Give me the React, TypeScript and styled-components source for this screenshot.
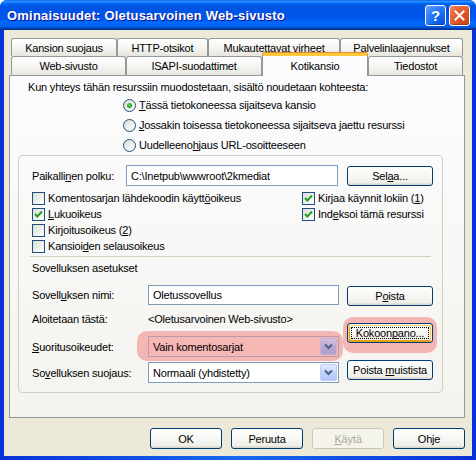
import React, { ReactNode } from "react";
import styled, { createGlobalStyle } from "styled-components";

const GlobalStyle = createGlobalStyle`
  html, body {
    margin: 0;
    padding: 0;
  }
  body {
    font-family: "Liberation Sans", Arial, sans-serif;
    font-size: 11px;
    letter-spacing: -0.2px;
    color: #000;
  }
  u {
    text-decoration: underline;
    text-underline-offset: 1px;
  }
`;

const Window = styled.div`
  width: 476px;
  height: 460px;
  box-sizing: border-box;
  display: flex;
  flex-direction: column;
  background: linear-gradient(to right, #0831d9, #166aee 50%, #0831d9);
  border-radius: 7px 7px 0 0;
  overflow: hidden;
`;

const TitleBar = styled.div`
  height: 30px;
  flex: none;
  display: flex;
  align-items: center;
  padding: 0 6px 0 7px;
  gap: 3px;
  background: linear-gradient(
    to bottom,
    #0058ee 0%,
    #3593ff 4%,
    #288eff 6%,
    #127dff 8%,
    #036ffc 10%,
    #0262ee 14%,
    #0057e5 20%,
    #0054e3 24%,
    #0055eb 56%,
    #005bf5 66%,
    #026afe 76%,
    #0062ef 86%,
    #0052d6 92%,
    #0040ab 94%,
    #003092 100%
  );
`;

const Title = styled.div`
  flex: 1;
  color: #fff;
  font-weight: bold;
  font-size: 13px;
  letter-spacing: 0.2px;
  text-shadow: 1px 1px #0f1089;
  white-space: nowrap;
`;

const CaptionButton = styled.div<{ $kind: "help" | "close" }>`
  width: 21px;
  height: 21px;
  box-sizing: border-box;
  border: 1px solid #fff;
  border-radius: 3px;
  display: flex;
  align-items: center;
  justify-content: center;
  color: #fff;
  font-weight: bold;
  font-size: 15px;
  background: ${({ $kind }) =>
    $kind === "help"
      ? "radial-gradient(circle at 90% 90%, #0054e3 0%, #2276f5 55%, #68a2ff 100%)"
      : "radial-gradient(circle at 90% 90%, #cc4616 0%, #e3592c 55%, #f08a60 100%)"};
  box-shadow: inset 0 -1px 1px rgba(0, 0, 0, 0.25);
`;

const Body = styled.div`
  flex: 1;
  margin: 0 4px 4px;
  background: #ece9d8;
  padding: 8px 7px 0 5px;
  display: flex;
  flex-direction: column;
`;

const TabStrip = styled.div`
  padding: 0 2px;
  display: flex;
  flex-direction: column;
`;

const TabRow = styled.div<{ $height: number }>`
  display: flex;
  height: ${({ $height }) => $height}px;
  align-items: flex-end;
`;

const Tab = styled.div<{ $width: number; $active?: boolean }>`
  position: relative;
  width: ${({ $width }) => $width}px;
  height: ${({ $active }) => ($active ? "23px" : "100%")};
  margin-bottom: ${({ $active }) => ($active ? "-1px" : "0")};
  z-index: ${({ $active }) => ($active ? 2 : 1)};
  box-sizing: border-box;
  border: 1px solid #919b9c;
  border-bottom: none;
  border-radius: 3px 3px 0 0;
  display: flex;
  align-items: ${({ $active }) => ($active ? "flex-start" : "center")};
  padding-top: ${({ $active }) => ($active ? "4px" : "0")};
  justify-content: center;
  white-space: nowrap;
  background: ${({ $active }) =>
    $active ? "#fcfcfe" : "linear-gradient(to bottom, #ffffff, #f3f3ef 60%, #e6e5de)"};
  border-top: ${({ $active }) => ($active ? "3px solid #ffc83c" : "1px solid #919b9c")};
  ${({ $active }) => ($active ? "box-shadow: 0 -1px 0 #e68b2c;" : "")}
`;

const Panel = styled.div`
  height: 343px;
  box-sizing: border-box;
  border: 1px solid #919b9c;
  background: linear-gradient(to bottom, #fcfcfe, #f4f3ee);
  padding: 4px 0 0;
  display: flex;
  flex-direction: column;
`;

const Intro = styled.div`
  line-height: 14px;
  padding-left: 18px;
`;

const RadioList = styled.div`
  margin: 1px 0 0 113px;
  display: flex;
  flex-direction: column;
`;

const OptionRow = styled.div<{ $height: number }>`
  height: ${({ $height }) => $height}px;
  display: flex;
  align-items: center;
  gap: 3px;
  white-space: nowrap;
`;

const RadioCircle = styled.span<{ $checked?: boolean }>`
  width: 13px;
  height: 13px;
  box-sizing: border-box;
  border-radius: 50%;
  border: 1px solid #1c5180;
  background: linear-gradient(135deg, #dcdcd7, #ffffff);
  display: flex;
  align-items: center;
  justify-content: center;
  &::after {
    content: "";
    display: ${({ $checked }) => ($checked ? "block" : "none")};
    width: 5px;
    height: 5px;
    border-radius: 50%;
    background: radial-gradient(circle at 40% 40%, #5ed65a, #21a121 60%, #188518);
  }
`;

const CheckBox = styled.span`
  width: 13px;
  height: 13px;
  flex: none;
  box-sizing: border-box;
  border: 1px solid #1c5180;
  background: linear-gradient(135deg, #dcdcd7, #ffffff);
  display: flex;
  align-items: center;
  justify-content: center;
`;

const GroupBox = styled.div`
  margin: 0 21px 0 8px;
  height: 238px;
  box-sizing: border-box;
  border: 1px solid #d0d0bf;
  border-radius: 4px;
  padding: 9px 9px 0 13px;
  display: flex;
  flex-direction: column;
`;

const PathRow = styled.div`
  height: 21px;
  display: flex;
  align-items: center;
  gap: 9px;
`;

const Label = styled.div<{ $width?: number }>`
  width: ${({ $width }) => ($width ? `${$width}px` : "auto")};
  flex: none;
  white-space: nowrap;
`;

const Field = styled.div<{ $width: number; $height?: number }>`
  width: ${({ $width }) => $width}px;
  height: ${({ $height }) => $height ?? 21}px;
  box-sizing: border-box;
  border: 1px solid #7f9db9;
  background: #fff;
  padding: 0 4px;
  display: flex;
  align-items: center;
  white-space: nowrap;
`;

const Button = styled.div<{ $width: number; $height?: number; $disabled?: boolean; $focused?: boolean }>`
  width: ${({ $width }) => $width}px;
  height: ${({ $height }) => $height ?? 21}px;
  flex: none;
  box-sizing: border-box;
  border: 1px solid ${({ $disabled }) => ($disabled ? "#c9c7ba" : "#003c74")};
  border-radius: 3px;
  display: flex;
  align-items: center;
  justify-content: center;
  white-space: nowrap;
  color: ${({ $disabled }) => ($disabled ? "#aca899" : "#000")};
  background: ${({ $disabled }) =>
    $disabled ? "#f5f4ea" : "linear-gradient(to bottom, #ffffff, #f0f0ea 86%, #d6d0c5)"};
  position: relative;
  z-index: 1;
  ${({ $focused }) =>
    $focused
      ? `box-shadow: inset -1px 1px #fff0cf, inset 1px 2px #fdd889, inset -2px 2px #fbc761, inset 2px -2px #e5a01a;
         &::after {
           content: "";
           position: absolute;
           inset: 3px;
           border: 1px dotted #000;
         }`
      : ""}
`;

const CheckGrid = styled.div`
  margin-top: 4px;
  display: grid;
  grid-template-columns: 270px 1fr;
  grid-auto-rows: 16px;
`;

const Separator = styled.div`
  margin: 2px 0 0 -2px;
  width: 401px;
  border-top: 1px solid #d0d0bf;
`;

const SectionTitle = styled.div`
  margin-top: 4px;
  line-height: 14px;
`;

const AppSection = styled.div`
  margin-top: 10px;
  display: flex;
`;

const AppGrid = styled.div`
  display: grid;
  grid-template-columns: 116px 191px;
  grid-template-rows: 20px 28px 27px 25px;
  align-items: center;
`;

const ButtonColumn = styled.div`
  margin-left: 8px;
  padding-top: 1px;
  display: flex;
  flex-direction: column;
  gap: 17px;
`;

const Marked = styled.div`
  position: relative;
`;

const MarkShape = styled.div<{ $t: number; $r: number; $b: number; $l: number }>`
  position: absolute;
  top: ${({ $t }) => -$t}px;
  right: ${({ $r }) => -$r}px;
  bottom: ${({ $b }) => -$b}px;
  left: ${({ $l }) => -$l}px;
  border-radius: 10px;
  background: #f3b6b2;
  z-index: 0;
`;

const Combo = styled.div<{ $width: number; $tinted?: boolean }>`
  width: ${({ $width }) => $width}px;
  height: 21px;
  box-sizing: border-box;
  border: 1px solid ${({ $tinted }) => ($tinted ? "#b79aae" : "#7f9db9")};
  background: ${({ $tinted }) => ($tinted ? "#f6b7b5" : "#fff")};
  display: flex;
  align-items: center;
  padding: 0 1px 0 4px;
  position: relative;
  z-index: 1;
  & > span:last-child {
    ${({ $tinted }) =>
      $tinted
        ? "background: linear-gradient(to bottom, #d4bfdc, #b9a9d4 50%, #ad9ecc); border-color: #c5b1d5;"
        : ""}
  }
`;

const ComboText = styled.span`
  flex: 1;
  white-space: nowrap;
`;

const ComboArrow = styled.span`
  width: 17px;
  height: 17px;
  box-sizing: border-box;
  border: 1px solid #bccdf8;
  border-radius: 2px;
  background: linear-gradient(to bottom, #e1eafe, #c3d3fd 50%, #b1c6f7);
  display: flex;
  align-items: center;
  justify-content: center;
`;

const Footer = styled.div`
  margin-top: 10px;
  display: flex;
  justify-content: flex-end;
  gap: 9px;
`;

const Check = () => (
  <svg width="9" height="9" viewBox="0 0 9 9">
    <polyline points="1,4 3.3,6.5 8,1.5" fill="none" stroke="#21a121" strokeWidth="2" />
  </svg>
);

const Chevron = () => (
  <svg width="9" height="7" viewBox="0 0 9 7">
    <polyline points="1,1.5 4.5,5 8,1.5" fill="none" stroke="#4d6185" strokeWidth="2" />
  </svg>
);

const CloseIcon = () => (
  <svg width="11" height="11" viewBox="0 0 11 11">
    <path d="M1.5 1.5 L9.5 9.5 M9.5 1.5 L1.5 9.5" stroke="#fff" strokeWidth="2" strokeLinecap="square" />
  </svg>
);

type OptionProps = { checked?: boolean; children: ReactNode };

const Radio = ({ checked, children }: OptionProps) => (
  <OptionRow $height={20}>
    <RadioCircle $checked={checked} />
    <span>{children}</span>
  </OptionRow>
);

const CheckItem = ({ checked, children }: OptionProps) => (
  <OptionRow $height={16}>
    <CheckBox>{checked && <Check />}</CheckBox>
    <span>{children}</span>
  </OptionRow>
);

const ComboBox = ({ value, tinted }: { value: string; tinted?: boolean }) => (
  <Combo $width={191} $tinted={tinted}>
    <ComboText>{value}</ComboText>
    <ComboArrow>
      <Chevron />
    </ComboArrow>
  </Combo>
);

type BtnProps = {
  width: number;
  height?: number;
  disabled?: boolean;
  focused?: boolean;
  children: ReactNode;
};

const PushButton = ({ width, height, disabled, focused, children }: BtnProps) => (
  <Button $width={width} $height={height} $disabled={disabled} $focused={focused}>
    <span>{children}</span>
  </Button>
);

const App = () => (
  <>
    <GlobalStyle />
    <Window>
      <TitleBar>
        <Title>Ominaisuudet: Oletusarvoinen Web-sivusto</Title>
        <CaptionButton $kind="help">?</CaptionButton>
        <CaptionButton $kind="close">
          <CloseIcon />
        </CaptionButton>
      </TitleBar>
      <Body>
        <TabStrip>
          <TabRow $height={18}>
            <Tab $width={106}>Kansion suojaus</Tab>
            <Tab $width={91}>HTTP-otsikot</Tab>
            <Tab $width={132}>Mukautettavat virheet</Tab>
            <Tab $width={123}>Palvelinlaajennukset</Tab>
          </TabRow>
          <TabRow $height={19}>
            <Tab $width={115}>Web-sivusto</Tab>
            <Tab $width={136}>ISAPI-suodattimet</Tab>
            <Tab $width={106} $active>
              Kotikansio
            </Tab>
            <Tab $width={95}>Tiedostot</Tab>
          </TabRow>
        </TabStrip>
        <Panel>
          <Intro>Kun yhteys tähän resurssiin muodostetaan, sisältö noudetaan kohteesta:</Intro>
          <RadioList>
            <Radio checked>
              <u>T</u>ässä tietokoneessa sijaitseva kansio
            </Radio>
            <Radio>
              <u>J</u>ossakin toisessa tietokoneessa sijaitseva jaettu resurssi
            </Radio>
            <Radio>
              Uudelleeno<u>h</u>jaus URL-osoitteeseen
            </Radio>
          </RadioList>
          <GroupBox>
            <PathRow>
              <Label $width={85}>
                Paikalli<u>n</u>en polku:
              </Label>
              <Field $width={212}>C:\Inetpub\wwwroot\2kmediat</Field>
              <PushButton width={86} height={20}>
                Sel<u>a</u>a...
              </PushButton>
            </PathRow>
            <CheckGrid>
              <CheckItem>
                Komentosarjan lähdekoodin käytt<u>ö</u>oikeus
              </CheckItem>
              <CheckItem checked>
                Kirjaa käynnit lokiin (<u>1</u>)
              </CheckItem>
              <CheckItem checked>
                <u>L</u>ukuoikeus
              </CheckItem>
              <CheckItem checked>
                Ind<u>e</u>ksoi tämä resurssi
              </CheckItem>
              <CheckItem>
                Kirjoitusoikeus (<u>2</u>)
              </CheckItem>
              <span />
              <CheckItem>
                Kansioi<u>d</u>en selausoikeus
              </CheckItem>
              <span />
            </CheckGrid>
            <Separator />
            <SectionTitle>Sovelluksen asetukset</SectionTitle>
            <AppSection>
              <AppGrid>
                <Label>
                  Sovell<u>u</u>ksen nimi:
                </Label>
                <Field $width={191} $height={20}>
                  Oletussovellus
                </Field>
                <Label>Aloitetaan tästä:</Label>
                <Label>&lt;Oletusarvoinen Web-sivusto&gt;</Label>
                <Label>
                  <u>S</u>uoritusoikeudet:
                </Label>
                <Marked>
                  <MarkShape $t={5} $r={4} $b={4} $l={11} />
                  <ComboBox value="Vain komentosarjat" tinted />
                </Marked>
                <Label>
                  So<u>v</u>elluksen suojaus:
                </Label>
                <ComboBox value="Normaali (yhdistetty)" />
              </AppGrid>
              <ButtonColumn>
                <PushButton width={86} height={20}>
                  P<u>o</u>ista
                </PushButton>
                <Marked>
                  <MarkShape $t={6} $r={4} $b={10} $l={4} />
                  <PushButton width={86} height={20} focused>
                    Kokoon<u>p</u>ano...
                  </PushButton>
                </Marked>
                <PushButton width={86} height={20}>
                  Poista <u>m</u>uistista
                </PushButton>
              </ButtonColumn>
            </AppSection>
          </GroupBox>
        </Panel>
        <Footer>
          <PushButton width={72}>OK</PushButton>
          <PushButton width={72}>Peruuta</PushButton>
          <PushButton width={72} disabled>
            <u>K</u>äytä
          </PushButton>
          <PushButton width={72}>Ohje</PushButton>
        </Footer>
      </Body>
    </Window>
  </>
);

export default App;
